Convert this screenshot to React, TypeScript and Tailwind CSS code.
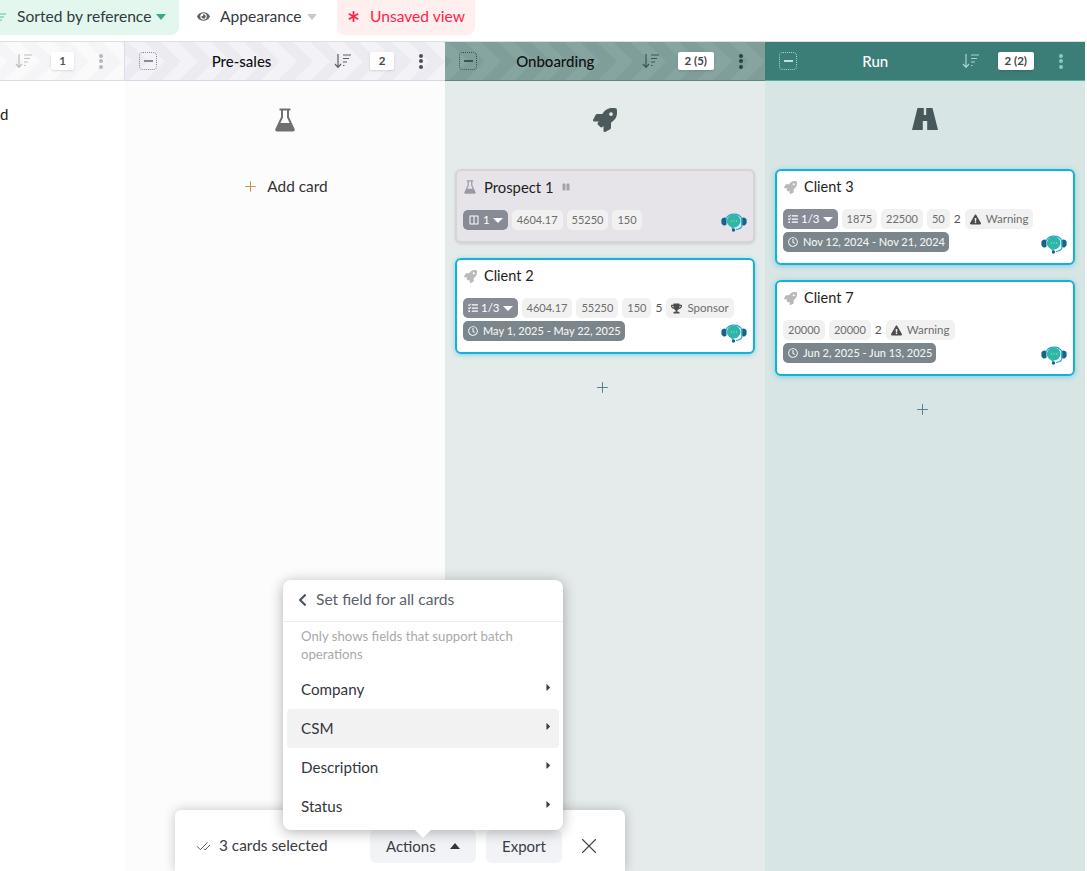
import type { ReactNode } from "react";
import {
  FaRocket,
  FaTrophy,
  FaExclamationTriangle,
  FaEye,
  FaAsterisk,
  FaRegClock,
  FaTasks,
  FaChevronLeft,
  FaCaretRight,
  FaPause,
} from "react-icons/fa";
import { RiLayoutColumnLine } from "react-icons/ri";
import { X, Plus, CheckCheck } from "lucide-react";

const SortIcon = ({ className }: { className: string }) => (
  <svg viewBox="0 0 18 16" className={className} fill="none" stroke="currentColor" strokeWidth="1.2">
    <path d="M4 1v13M1 11l3 3.4L7 11" />
    <path d="M9 2h8M9 5.5h6M9 9h4M9 12.5h1.5" />
  </svg>
);

const FlaskIcon = ({ className }: { className: string }) => (
  <svg viewBox="0 0 20 24" className={className} fill="currentColor">
    <path d="M4.5 0.5h11v2h-1.5v6.5l5.6 12c.5 1.2-.2 2.5-1.6 2.5H2c-1.400 0-2.100-1.300-1.600-2.500L6 9V2.500H4.500z M8 2.500v7l-2.600 5.500h9.200L12 9.500v-7z" fillRule="evenodd" />
  </svg>
);

const RoadIcon = ({ className }: { className: string }) => (
  <svg viewBox="0 0 26 22" className={className} fill="currentColor">
    <path d="M5.500 0H11.800V7H14.200V0H20.500L26 22H15.200V13H10.800V22H0Z" />
  </svg>
);

const Agent = () => (
  <svg viewBox="0 0 26 21" className="absolute right-[6px] bottom-[9px] h-[21px] w-[26px]">
    <path d="M5.500 7.500a3 3 0 0 0 -5 3a3 3 0 0 0 5 3z" fill="#14648c" />
    <path d="M20.500 7.500a3 3 0 0 1 5 3a3 3 0 0 1 -5 3z" fill="#14648c" />
    <path d="M5 8a8.500 7.500 0 0 1 16 0v6c0 2-2 4-6 4.500" fill="none" stroke="#2aa5cf" strokeWidth="1.200" />
    <path d="M13 3.500a6.500 6.500 0 0 1 0 13h-.5v2.500l-2.500-3a6.500 6.500 0 0 1 3-12.500z" fill="#2fb7a6" />
    <circle cx="12.500" cy="19" r="1.700" fill="#14648c" />
    <path d="M10 10h1M12.500 10h1M15 10h1" stroke="#a7e4da" strokeWidth="1.100" />
  </svg>
);

const Chevrons = ({ fill, id }: { fill: string; id: string }) => (
  <svg className="absolute inset-0 h-full w-full" aria-hidden="true">
    <defs>
      <pattern id={id} x="-13" width="33" height="39" patternUnits="userSpaceOnUse">
        <polygon points="0,0 16,0 36,19.500 16,39 0,39 20,19.500" fill={fill} />
        <polygon points="-33,0 -17,0 3,19.500 -17,39 -33,39 -13,19.500" fill={fill} />
      </pattern>
    </defs>
    <rect width="100%" height="100%" fill={`url(#${id})`} />
  </svg>
);

const Dots = ({ className }: { className: string }) => (
  <div className={`relative flex flex-col items-center gap-[1.500px] pl-[3px] ${className}`}>
    <span className="h-[4px] w-[4px] rounded-full bg-current" />
    <span className="h-[4px] w-[4px] rounded-full bg-current" />
    <span className="h-[4px] w-[4px] rounded-full bg-current" />
  </div>
);

const Pill = ({ children }: { children: ReactNode }) => (
  <span className="flex h-5 items-center gap-[5px] rounded-[5px] bg-[#f1f1f1] px-[5px] text-[11.500px] text-[#6e6e6e]">
    {children}
  </span>
);

const Num = ({ children }: { children: ReactNode }) => (
  <span className="flex h-5 items-center rounded-[5px] bg-[#f1f1f1] px-[5px] text-[11px] text-[#6e6e6e]">
    {children}
  </span>
);

const Steps = ({ label, icon }: { label: string; icon: ReactNode }) => (
  <span className="flex h-5 items-center gap-[3px] rounded-[5px] bg-[#868b95] px-[5px] text-[11.500px] text-white">
    {icon}
    {label}
    <span className="h-0 w-0 border-x-[5px] border-t-[5px] border-x-transparent border-t-white" />
  </span>
);

const DatePill = ({ label }: { label: string }) => (
  <span className="flex h-5 w-fit items-center gap-[5px] rounded-[5px] bg-[#7a868b] pl-[5px] pr-[4px] text-[11px] font-medium text-[#f2f4f4]">
    <FaRegClock className="h-[10px] w-[10px]" />
    {label}
  </span>
);

const Card = ({ title, date, children }: { title: string; date: string; children: ReactNode }) => (
  <div className="relative rounded-[6px] border-2 border-[#14b1d8] bg-white px-[6px] pb-[11px] pt-[1px] shadow-[0_1px_5px_rgba(20,177,216,0.45)]">
    <div className="flex h-[30px] items-center gap-[7px] pl-[1px] text-[14.500px] text-[#222]">
      <FaRocket className="h-[13px] w-[13px] text-[#b9b9b9]" />
      {title}
    </div>
    <div className="mt-[7px] flex flex-col gap-[3px]">
      <div className="flex items-center gap-x-[4px]">{children}</div>
      <DatePill label={date} />
    </div>
    <Agent />
  </div>
);

const Warning = () => (
  <Pill>
    <FaExclamationTriangle className="h-[11px] w-[11px] text-[#4c4c4c]" />
    Warning
  </Pill>
);

const Header = ({
  id,
  title,
  count,
  bg,
  chevron,
  boxClass,
  titleClass,
  sortClass,
  dotClass,
  borderClass,
}: {
  id: string;
  title: string;
  count: string;
  bg: string;
  chevron: string;
  boxClass: string;
  titleClass: string;
  sortClass: string;
  dotClass: string;
  borderClass: string;
}) => (
  <div className={`relative flex h-[39px] w-[320px] shrink-0 items-center border-b pl-[14px] ${bg} ${borderClass}`}>
    <Chevrons id={id} fill={chevron} />
    <span className={`relative flex h-[18px] w-[18px] items-center justify-center rounded-[4px] border border-dotted ${boxClass}`}>
      <span className="h-[2px] w-[9px] bg-current" />
    </span>
    <div className={`relative flex-1 pr-[8px] text-center text-[15px] font-medium ${titleClass}`}>{title}</div>
    <SortIcon className={`relative h-[16px] w-[18px] ${sortClass}`} />
    <span className="relative ml-[18px] flex h-[18px] min-w-[24px] items-center justify-center rounded-[2px] bg-white px-[7px] text-[11.500px] font-bold text-[#444] shadow-sm">
      {count}
    </span>
    <Dots className={`w-[51px] ${dotClass}`} />
  </div>
);

const MenuItem = ({ label, active }: { label: string; active?: boolean }) => (
  <div className={`mx-[4px] flex h-[39px] items-center justify-between rounded-[4px] pl-[14px] pr-[5px] text-[15.200px] text-[#33363d] ${active ? "bg-[#f2f2f2]" : ""}`}>
    {label}
    <FaCaretRight className="mb-[4px] h-[11px] w-[11px] text-[#3b3f47]" />
  </div>
);

export default function App() {
  return (
    <div className="relative h-[871px] w-[1087px] overflow-hidden bg-white font-['Lato',sans-serif]">
      <div className="flex h-[41px] items-start text-[15.600px]">
        <div className="flex h-[35px] w-[179px] items-center rounded-br-[8px] bg-[#e3f7ef] pb-[2px] text-[#333a40]">
          <svg viewBox="0 0 6 8" className="h-[8px] w-[6px] text-[#5cbfa5]" fill="none" stroke="currentColor">
            <path d="M0 1h6M0 4h4M0 7h2" />
          </svg>
          <span className="ml-[11px]">Sorted by reference</span>
          <span className="ml-[5px] h-0 w-0 border-x-[5px] border-t-[6px] border-x-transparent border-t-[#3dab81]" />
        </div>
        <div className="flex h-[35px] w-[158px] items-center pb-[2px] pl-[18px] text-[#333a40]">
          <FaEye className="h-[13px] w-[13px] text-[#5f6468]" />
          <span className="ml-[10px]">Appearance</span>
          <span className="ml-[5px] h-0 w-0 border-x-[5px] border-t-[6px] border-x-transparent border-t-[#c9c9c9]" />
        </div>
        <div className="flex h-[35px] w-[138px] items-center rounded-b-[8px] bg-[#fff0ef] pb-[2px] pl-[11px] text-[#ff2347]">
          <FaAsterisk className="h-[11px] w-[11px]" />
          <span className="ml-[11px]">Unsaved view</span>
        </div>
      </div>

      <div className="flex border-t border-[#dfdfdf]">
        <div className="relative flex h-[39px] w-[125px] shrink-0 items-center justify-end border-b border-r border-[#dcdbe6] bg-[#fafafb]">
          <Chevrons id="c0" fill="#f5f5f7" />
          <SortIcon className="relative h-[16px] w-[18px] text-[#bdbdc2]" />
          <span className="relative ml-[18px] flex h-[18px] items-center rounded-[2px] bg-white px-[8px] text-[11.500px] font-bold text-[#555] shadow-sm">1</span>
          <Dots className="w-[50px] text-[#b8b8bc]" />
        </div>
        <Header id="c1" title="Pre-sales" count="2" bg="bg-[#f3f2f7]" chevron="#ecebf1" borderClass="border-[#d9d7e6]" boxClass="border-[#7d86a8] text-[#8b8b95]" titleClass="text-[#111]" sortClass="text-[#5c6068]" dotClass="text-[#4c4f5c]" />
        <Header id="c2" title="Onboarding" count="2 (5)" bg="bg-[#7f9e9a]" chevron="#86a4a0" borderClass="border-[#5e8780]" boxClass="border-[#35524f] text-[#3b5553]" titleClass="text-[#111]" sortClass="text-[#3f5552]" dotClass="text-[#2f3f3e]" />
        <Header id="c3" title="Run" count="2 (2)" bg="bg-[#3a7e77]" chevron="#3a7e77" borderClass="border-[#4fb0a3]" boxClass="border-[#a9d5cf] text-[#bfe0db]" titleClass="text-white" sortClass="text-[#a9d5cf]" dotClass="text-[#8fc6c8]" />
      </div>

      <div className="flex h-[790px]">
        <div className="w-[125px] shrink-0 bg-white pt-[22px] text-[15px] text-[#222]">d</div>

        <div className="flex w-[320px] shrink-0 flex-col items-center bg-[#fcfcfc] pt-[27px]">
          <FlaskIcon className="h-[24px] w-[20px] text-[#6f6f6f]" />
          <div className="mt-[43px] flex items-center gap-[8px] text-[15.400px] text-[#333]">
            <Plus className="h-[17px] w-[17px] text-[#c98a4b]" strokeWidth={1.300} />
            Add card
          </div>
        </div>

        <div className="w-[320px] shrink-0 bg-[#e5ebea] px-[10px] pt-[27px]">
          <div className="flex h-[24px] justify-center">
            <FaRocket className="h-[24px] w-[24px] text-[#4d5a5c]" />
          </div>
          <div className="mt-[37px] flex flex-col gap-[15px]">
            <div className="relative rounded-[6px] border-2 border-[#d6d4d9] bg-[#e6e4e9] px-[6px] pb-[11px] pt-[1px] shadow-[0_1px_3px_rgba(0,0,0,0.12)]">
              <div className="flex h-[30px] items-center gap-[8px] pl-[1px] text-[14.800px] text-[#222]">
                <FlaskIcon className="h-[14px] w-[12px] text-[#9a98a5]" />
                Prospect 1
                <FaPause className="ml-[1px] h-[8px] w-[8px] text-[#a5a3ad]" />
              </div>
              <div className="mt-[8px] flex items-center gap-x-[4px]">
                <Steps label="1" icon={<RiLayoutColumnLine className="h-[12px] w-[12px]" />} />
                <Num>4604.17</Num>
                <Num>55250</Num>
                <Num>150</Num>
              </div>
              <Agent />
            </div>
            <Card title="Client 2" date="May 1, 2025 - May 22, 2025">
              <Steps label="1/3" icon={<FaTasks className="h-[10px] w-[10px]" />} />
              <Num>4604.17</Num>
              <Num>55250</Num>
              <Num>150</Num>
              <span className="text-[12px] text-[#555]">5</span>
              <Pill>
                <FaTrophy className="h-[11px] w-[11px] text-[#4c4c4c]" />
                Sponsor
              </Pill>
            </Card>
          </div>
          <div className="mt-[25px] flex justify-center pr-[6px]">
            <Plus className="h-[17px] w-[17px] text-[#4f7885]" strokeWidth={1.300} />
          </div>
        </div>

        <div className="w-[320px] shrink-0 bg-[#d7e5e4] px-[10px] pt-[27px]">
          <div className="flex h-[24px] justify-center">
            <RoadIcon className="h-[22px] w-[26px] text-[#46585a]" />
          </div>
          <div className="mt-[37px] flex flex-col gap-[15px]">
            <Card title="Client 3" date="Nov 12, 2024 - Nov 21, 2024">
              <Steps label="1/3" icon={<FaTasks className="h-[10px] w-[10px]" />} />
              <Num>1875</Num>
              <Num>22500</Num>
              <Num>50</Num>
              <span className="text-[12px] text-[#555]">2</span>
              <Warning />
            </Card>
            <Card title="Client 7" date="Jun 2, 2025 - Jun 13, 2025">
              <Num>20000</Num>
              <Num>20000</Num>
              <span className="text-[12px] text-[#555]">2</span>
              <Warning />
            </Card>
          </div>
          <div className="mt-[25px] flex justify-center pr-[6px]">
            <Plus className="h-[17px] w-[17px] text-[#4f7885]" strokeWidth={1.300} />
          </div>
        </div>
      </div>

      <div className="absolute left-[175px] top-[810px] flex h-[61px] w-[450px] items-center rounded-t-[6px] bg-white pl-[21px] pt-[11px] text-[15.400px] text-[#3a3d44] shadow-[0_0_12px_rgba(0,0,0,0.22)]">
        <CheckCheck className="h-[15px] w-[15px] text-[#555]" strokeWidth={1.500} />
        <span className="ml-[8px] w-[151px]">3 cards selected</span>
        <div className="relative flex h-[33px] w-[106px] items-center rounded-[6px] bg-[#f1f3f6] pl-[16px] text-[15px]">
          Actions
          <span className="ml-[14px] h-0 w-0 border-x-[5.500px] border-b-[6px] border-x-transparent border-b-[#33363d]" />
        </div>
        <div className="ml-[10px] flex h-[33px] w-[76px] items-center justify-center rounded-[6px] bg-[#f1f3f6] text-[15px]">Export</div>
        <X className="ml-[14px] h-[26px] w-[26px] text-[#444]" strokeWidth={1} />
      </div>

      <div className="absolute left-[283px] top-[580px] h-[250px] w-[280px] rounded-[8px] bg-white shadow-[0_2px_14px_rgba(0,0,0,0.3)]">
        <div className="flex h-[42px] items-center border-b border-[#eeeeee] pb-[2px] pl-[15px] text-[15.600px] text-[#5a5f6b]">
          <FaChevronLeft className="h-[14px] w-[9px] text-[#4d5562]" />
          <span className="ml-[9px]">Set field for all cards</span>
        </div>
        <p className="mt-[5px] px-[18px] text-[13.200px] leading-[18px] text-[#a9a9a9]">Only shows fields that support batch operations</p>
        <div className="mt-[7px]">
          <MenuItem label="Company" />
          <MenuItem label="CSM" active />
          <MenuItem label="Description" />
          <MenuItem label="Status" />
        </div>
        <span className="absolute left-[132px] top-[250px] h-0 w-0 border-x-[8px] border-t-[8px] border-x-transparent border-t-white" />
      </div>
    </div>
  );
}
